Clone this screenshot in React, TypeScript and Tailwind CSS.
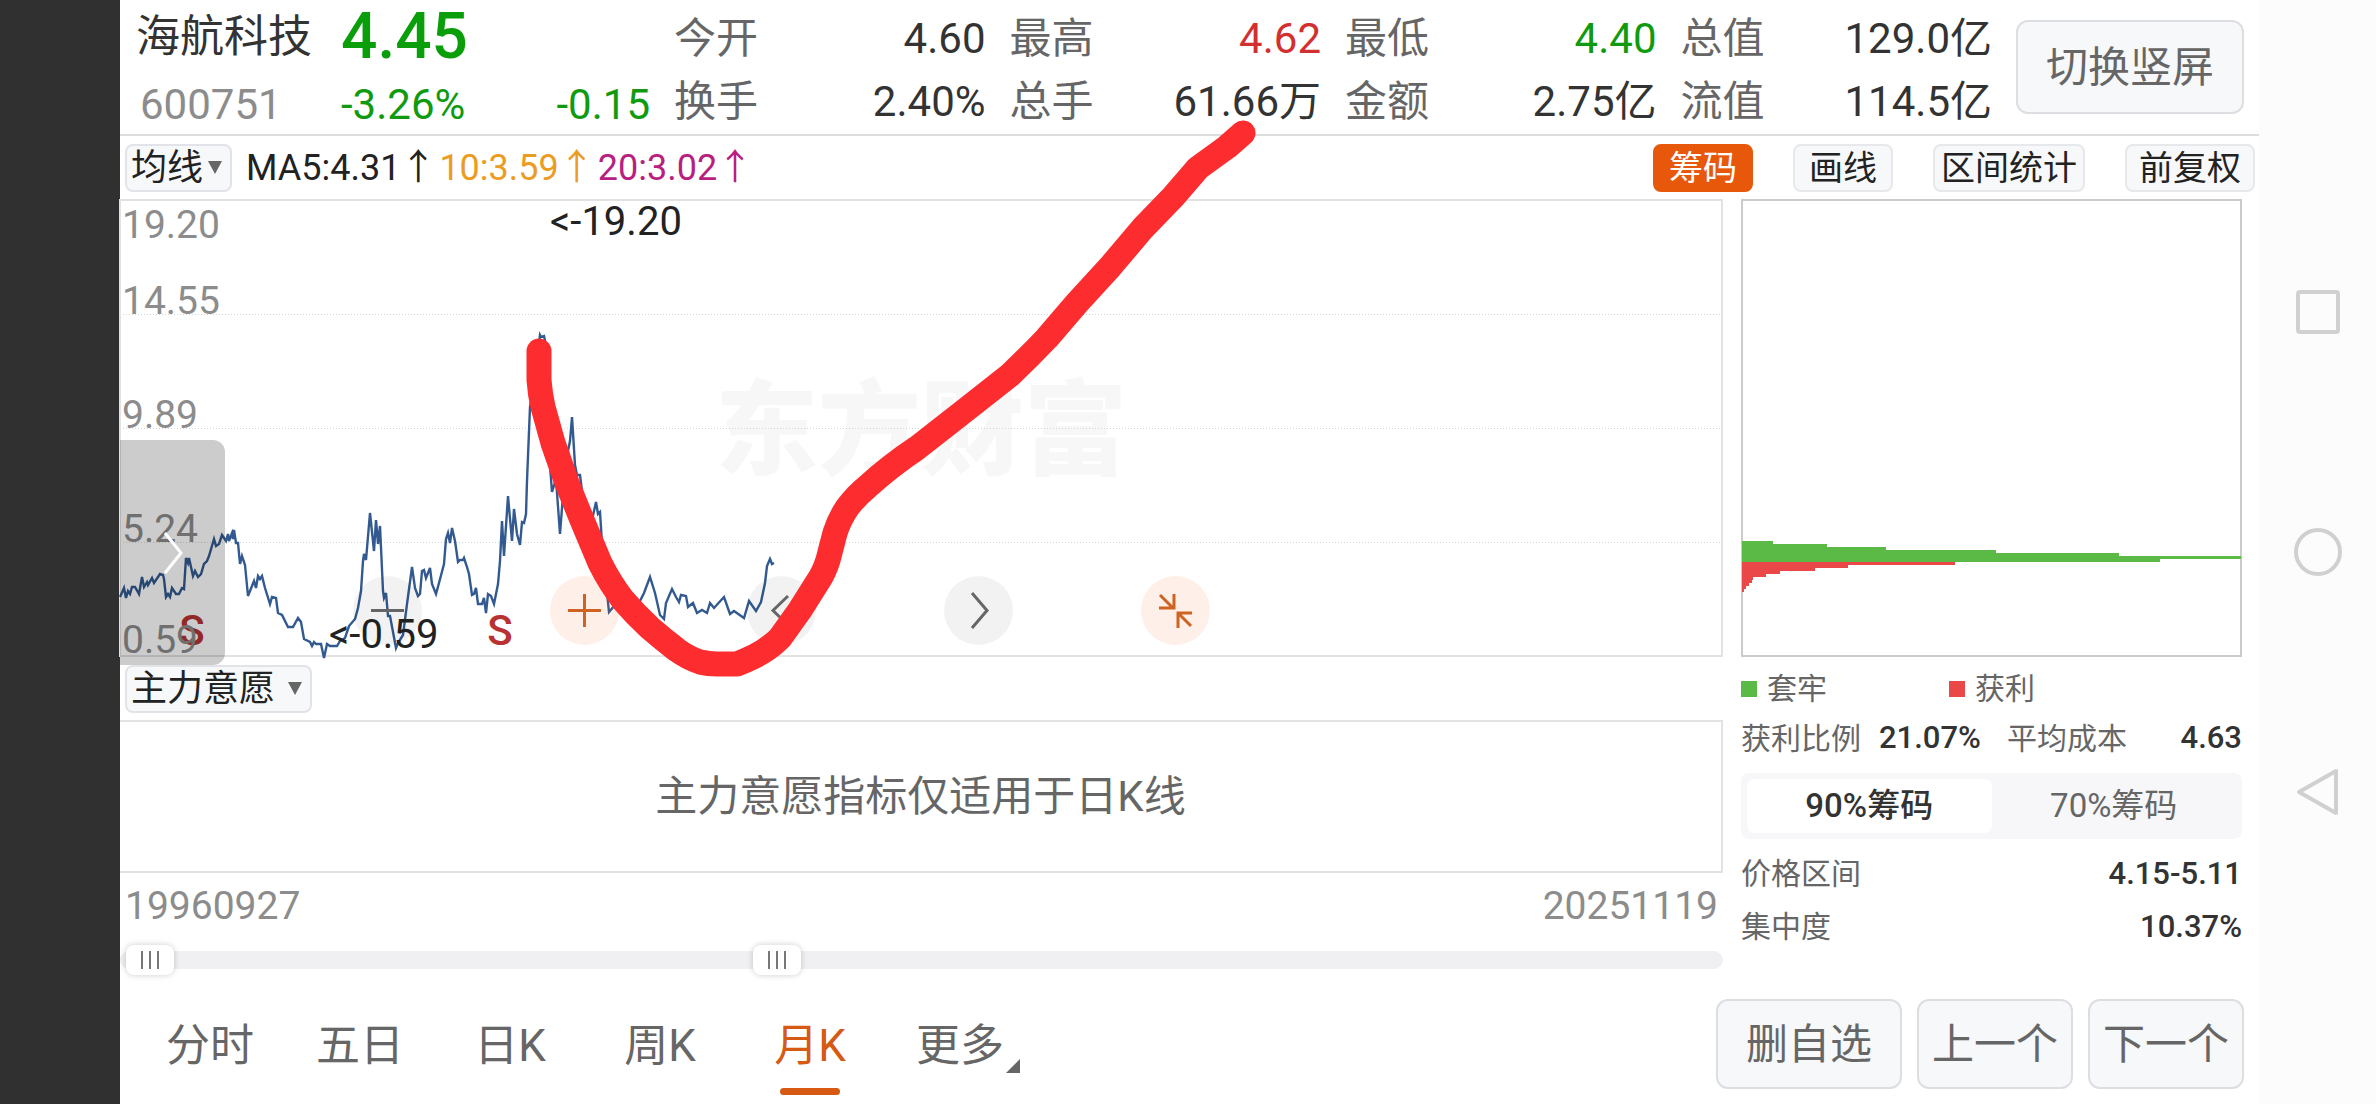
import { useState } from "react";
import clsx from "clsx";

interface Quote {
  label: string;
  value: string;
  color?: string;
}

const quotes: Quote[] = [
  { label: "今开", value: "4.60" },
  { label: "最高", value: "4.62", color: "text-[#d23030]" },
  { label: "最低", value: "4.40", color: "text-[#0f9a0f]" },
  { label: "总值", value: "129.0亿" },
  { label: "换手", value: "2.40%" },
  { label: "总手", value: "61.66万" },
  { label: "金额", value: "2.75亿" },
  { label: "流值", value: "114.5亿" },
];

const tools = [
  { name: "筹码", padding: "px-3.5" },
  { name: "画线", padding: "px-3.5" },
  { name: "区间统计", padding: "px-1.5" },
  { name: "前复权", padding: "px-3" },
];

const periods = ["分时", "五日", "日K", "周K", "月K", "更多"];

const axis = [
  { value: "19.20", y: 39 },
  { value: "14.55", y: 115 },
  { value: "9.89", y: 229 },
  { value: "5.24", y: 343 },
  { value: "0.59", y: 454 },
];

const priceLine =
  "0,398 4,389 6,399 8,392 10,395 12,388 15,388 19,395 22,378 24,388 27,383 28,386 32,379 34,384 40,375 43,376 44,380 46,398 48,395 50,398 52,389 56,395 59,395 62,389 64,390 66,359 68,364 69,359 73,377 75,372 78,378 81,375 84,365 87,362 89,357 94,340 96,347 99,345 102,336 106,342 108,335 109,342 112,334 113,340 114,331 116,344 118,344 120,365 122,357 125,366 128,397 134,382 136,389 138,377 140,380 142,377 145,389 150,405 152,398 156,399 158,414 162,416 168,428 173,428 178,419 181,423 184,440 190,443 192,447 194,443 196,445 201,445 204,459 207,445 210,447 217,447 220,442 225,439 229,427 235,420 238,409 241,392 243,362 244,355 246,361 250,314 254,352 256,321 258,345 260,327 263,392 264,399 266,394 268,417 270,417 276,449 278,444 283,436 287,405 292,368 295,389 298,397 300,395 302,372 304,371 306,379 310,369 312,385 316,395 319,384 324,365 326,340 328,334 330,344 332,329 335,342 338,363 340,361 343,361 344,359 347,368 349,375 352,396 354,395 356,389 358,405 362,405 364,399 366,414 368,395 371,397 374,405 378,385 380,362 382,322 384,357 388,297 392,342 394,310 397,335 400,346 402,323 404,324 406,315 407,282 410,208 413,190 420,136 421,138 424,137 425,142 428,240 432,293 436,280 440,335 443,296 448,252 450,242 452,218 455,266 457,276 460,276 463,300 470,330 476,303 478,315 480,313 482,344 489,413 500,400 510,410 520,402 524,394 530,378 535,394 540,416 544,420 546,404 552,390 556,398 559,403 561,396 566,397 568,408 573,404 577,414 582,411 587,414 590,404 594,409 604,398 610,415 614,412 624,419 629,402 636,412 641,403 645,384 647,367 650,360 652,365 654,364";

const chips = [
  { width: 31, trapped: true },
  { width: 85, trapped: true },
  { width: 144, trapped: true },
  { width: 254, trapped: true },
  { width: 377, trapped: true },
  { width: 499, trapped: true },
  { width: 418, trapped: true },
  { width: 213, trapped: false },
  { width: 106, trapped: false },
  { width: 73, trapped: false },
  { width: 38, trapped: false },
  { width: 24, trapped: false },
  { width: 11, trapped: false },
  { width: 10, trapped: false },
  { width: 7, trapped: false },
  { width: 4, trapped: false },
  { width: 2, trapped: false },
];

const Header = () => (
  <header className="flex h-[136px] items-center border-b-2 border-[#dcdddf] pl-4 pr-[15px]">
    <div className="grid w-[514px] grid-cols-[205px_1fr] pt-2 leading-[68px]">
      <h1 className="text-[44px] text-[#333]">海航科技</h1>
      <div className="text-[64px] font-medium text-[#0a9f0a]">4.45</div>
      <div className="pl-1 text-[42px] text-[#8c8c8c]">600751</div>
      <div className="flex justify-between text-[42px] text-[#0f9a0f]">
        <span>-3.26%</span>
        <span>-0.15</span>
      </div>
    </div>
    <dl className="ml-6 grid flex-1 grid-cols-4 gap-x-6 pt-1.5 text-[42px] leading-[63px]">
      {quotes.map((quote) => (
        <div key={quote.label} className="flex justify-between">
          <dt className="text-[#666]">{quote.label}</dt>
          <dd className={quote.color ?? "text-[#333]"}>{quote.value}</dd>
        </div>
      ))}
    </dl>
    <button className="ml-6 h-[94px] w-[228px] rounded-xl border-2 border-[#dcdee2] bg-[#f7f8fa] text-[42px] text-[#666]">切换竖屏</button>
  </header>
);

interface DropdownProps {
  label: string;
  option: string;
  width: string;
}

const Dropdown = ({ label, option, width }: DropdownProps) => (
  <div className={clsx("relative ml-[5px] h-12", width)}>
    <select aria-label={label} className="h-full w-full appearance-none rounded-lg border-2 border-[#e1e3e8] bg-[#f7f8fa] pl-1 text-[36px] leading-[44px] text-[#222]">
      <option>{option}</option>
    </select>
    <svg className="pointer-events-none absolute right-2.5 top-[17px] h-3.5 w-3.5" viewBox="0 0 14 14">
      <path d="M0 0H14L7 13Z" fill="#666" />
    </svg>
  </div>
);

const Toolbar = () => {
  const [tool, setTool] = useState("筹码");

  return (
    <div className="flex h-[63px] items-center pr-1">
      <Dropdown label="均线" option="均线" width="w-[107px]" />
      <div className="ml-3.5 flex flex-1 gap-[3px] text-[36px] leading-[48px]">
        <span className="text-[#222]">MA5:4.31↑</span>
        <span className="text-[#eb9c22]">10:3.59↑</span>
        <span className="text-[#b81f80]">20:3.02↑</span>
      </div>
      <div className="flex gap-10 text-[34px] leading-[44px]">
        {tools.map(({ name, padding }) => (
          <button
            key={name}
            onClick={() => setTool(name)}
            className={clsx("rounded-lg border-2", padding, tool === name ? "border-[#e8580a] bg-[#e8580a] text-white" : "border-[#e6e8ec] bg-[#f7f8fa] text-[#222]")}
          >
            {name}
          </button>
        ))}
      </div>
    </div>
  );
};

const PriceChart = () => (
  <div className="relative">
    <svg className="block h-auto w-full overflow-visible" viewBox="0 0 1603 458" fontSize="39">
      <text x="595" y="268" fontSize="103" fontWeight="900" fill="#f7f7f7">
        东方财富
      </text>
      {[115, 229, 343].map((y) => (
        <line key={y} x1="0" x2="1602" y1={y + 0.5} y2={y + 0.5} stroke="#d4d4d4" strokeDasharray="1 2" />
      ))}
      <rect x="0" y="1" width="1602" height="456" fill="none" stroke="#e2e2e2" strokeWidth="2" />
      <polyline points={priceLine} fill="none" stroke="#335a90" strokeWidth="2.4" />
      <g fill="#b83232" fontSize="42" fontWeight="500" textAnchor="middle">
        <text x="72" y="446">S</text>
        <text x="380" y="446">S</text>
      </g>
      <g fill="#8c8c8c">
        {axis.map(({ value, y }) => (
          <text key={value} x="2" y={y}>
            {value}
          </text>
        ))}
      </g>
      <g fill="#222" fontSize="40">
        <text x="430" y="36">&lt;-19.20</text>
        <text x="209" y="449">&lt;-0.59</text>
      </g>
    </svg>

    {/* zoom and pan buttons */}
    <div className="absolute bottom-3 left-[233px] flex gap-32">
      <RoundButton label="缩小" path="M18 34.5H51" />
      <RoundButton label="放大" path="M18 34.5H51M34.5 18V51" accent />
      <RoundButton label="左移" path="M41 20L26 34.5L41 49" />
      <RoundButton label="右移" path="M28 17L43 34.5L28 52" />
      <RoundButton label="退出全屏" path="M19 19L32 32M33 18V32H18M50 50L37 37M37 52V37H51" accent />
    </div>

    <button aria-label="展开" className="absolute left-0 top-[241px] h-[225px] w-[105px] rounded-r-xl bg-black/20">
      <svg className="ml-11 h-11 w-5" viewBox="0 0 20 44" fill="none" stroke="#fff" strokeWidth="3">
        <path d="M1 2L17 22L1 42" />
      </svg>
    </button>
  </div>
);

interface RoundButtonProps {
  label: string;
  path: string;
  accent?: boolean;
}

const RoundButton = ({ label, path, accent }: RoundButtonProps) => (
  <button aria-label={label} className={clsx("h-[69px] w-[69px] rounded-full", accent ? "bg-[#f26a1b]/10 text-[#cf6321]" : "bg-black/5 text-[#666]")}>
    <svg viewBox="0 0 69 69" fill="none" stroke="currentColor" strokeWidth="3">
      <path d={path} />
    </svg>
  </button>
);

interface RangeHandleProps {
  label: string;
  value: number;
  onChange: (value: number) => void;
}

const RangeHandle = ({ label, value, onChange }: RangeHandleProps) => (
  <input
    type="range"
    aria-label={label}
    min={0}
    max={1000}
    value={value}
    onChange={(e) => onChange(Number(e.target.value))}
    className="pointer-events-none absolute inset-0 h-full w-full appearance-none bg-transparent [&::-webkit-slider-thumb]:pointer-events-auto [&::-webkit-slider-thumb]:h-[30px] [&::-webkit-slider-thumb]:w-12 [&::-webkit-slider-thumb]:appearance-none [&::-webkit-slider-thumb]:rounded-lg [&::-webkit-slider-thumb]:bg-white [&::-webkit-slider-thumb]:bg-[repeating-linear-gradient(90deg,#777_0_2px,#fff_2px_8px)] [&::-webkit-slider-thumb]:bg-[length:18px_18px] [&::-webkit-slider-thumb]:bg-center [&::-webkit-slider-thumb]:bg-no-repeat [&::-webkit-slider-thumb]:shadow-[0_0_6px_rgba(0,0,0,0.2)]"
  />
);

const ChartColumn = () => {
  const [start, setStart] = useState(4);
  const [end, setEnd] = useState(407);

  return (
    <section className="min-w-0 flex-1">
      <PriceChart />
      <div className="flex h-[63px] items-center">
        <Dropdown label="指标" option="主力意愿" width="w-[187px]" />
      </div>
      <div className="flex h-[153px] items-center justify-center border-2 border-l-0 border-[#e2e2e2] text-[42px] text-[#666]">主力意愿指标仅适用于日K线</div>
      <div className="flex justify-between px-[5px] pt-0.5 text-[39px] leading-[62px] text-[#8c8c8c]">
        <span>19960927</span>
        <span>20251119</span>
      </div>
      <div className="relative flex h-[46px] items-center">
        <div className="h-[18px] w-full rounded-full bg-[#f0f0f3]" />
        <RangeHandle label="开始日期" value={start} onChange={setStart} />
        <RangeHandle label="结束日期" value={end} onChange={setEnd} />
      </div>
    </section>
  );
};

const ChipColumn = () => {
  const [range, setRange] = useState("90%筹码");

  return (
    <aside className="w-[501px] text-[30px] text-[#666]">
      <svg className="block h-auto w-full" viewBox="0 0 501 458">
        <rect x="1" y="1" width="499" height="456" fill="#fff" stroke="#cbcbcb" strokeWidth="2" />
        {chips.map(({ width, trapped }, i) => (
          <rect key={i} x="1" y={342 + i * 3} width={width} height="3" fill={trapped ? "#5bb946" : "#e94748"} />
        ))}
      </svg>
      <div className="grid h-[63px] grid-cols-[208px_1fr] items-center">
        <div className="flex items-center gap-2.5">
          <i className="h-4 w-4 bg-[#5bb946]" />
          套牢
        </div>
        <div className="flex items-center gap-2.5">
          <i className="h-4 w-4 bg-[#e94748]" />
          获利
        </div>
      </div>
      <div className="flex h-9 items-center">
        <span>获利比例</span>
        <b className="ml-[18px] text-[31px] font-medium text-[#333]">21.07%</b>
        <span className="ml-[26px]">平均成本</span>
        <b className="ml-auto text-[31px] font-medium text-[#333]">4.63</b>
      </div>
      <div className="mt-[17px] flex rounded-lg bg-[#f7f7fa] p-1.5 text-[33px] leading-[54px]">
        {["90%筹码", "70%筹码"].map((name) => (
          <button key={name} onClick={() => setRange(name)} className={clsx("flex-1 rounded-lg", range === name && "bg-white font-medium text-[#333]")}>
            {name}
          </button>
        ))}
      </div>
      <div className="mt-2 flex justify-between leading-[53px]">
        <span>价格区间</span>
        <b className="text-[31px] font-medium text-[#333]">4.15-5.11</b>
      </div>
      <div className="flex justify-between leading-[53px]">
        <span>集中度</span>
        <b className="text-[31px] font-medium text-[#333]">10.37%</b>
      </div>
    </aside>
  );
};

const BottomBar = () => {
  const [period, setPeriod] = useState("月K");

  return (
    <footer className="flex items-center px-[15px] pb-3.5 pt-4">
      <nav className="flex flex-1">
        {periods.map((name) => (
          <button key={name} onClick={() => setPeriod(name)} className={clsx("relative h-[90px] w-[150px] pt-1 text-[44px]", period === name ? "text-[#d65a14]" : "text-[#666]")}>
            {name}
            {period === name && <span className="absolute -bottom-1.5 left-[45px] h-[7px] w-[60px] rounded-full bg-[#d65a14]" />}
            {name === "更多" && (
              <svg className="absolute bottom-4 right-[15px] h-3.5 w-3.5" viewBox="0 0 14 14">
                <path d="M14 0V14H0Z" fill="#666" />
              </svg>
            )}
          </button>
        ))}
      </nav>
      <div className="flex gap-[15px] text-[42px] text-[#666]">
        <button className="h-[90px] rounded-xl border-2 border-[#dcdee2] bg-[#f7f8fa] px-7">删自选</button>
        <button className="h-[90px] rounded-xl border-2 border-[#dcdee2] bg-[#f7f8fa] px-[13px]">上一个</button>
        <button className="h-[90px] rounded-xl border-2 border-[#dcdee2] bg-[#f7f8fa] px-[13px]">下一个</button>
      </div>
    </footer>
  );
};

const SystemNav = () => (
  <div className="flex w-[117px] flex-col items-center gap-48 bg-[#fcfcfc] pt-72">
    <button aria-label="最近任务">
      <svg className="h-12 w-12" viewBox="0 0 48 48" fill="none" stroke="#d0d0d0" strokeWidth="4">
        <rect x="4" y="4" width="40" height="40" rx="2" />
      </svg>
    </button>
    <button aria-label="主屏幕">
      <svg className="h-12 w-12" viewBox="0 0 48 48" fill="none" stroke="#d0d0d0" strokeWidth="4">
        <circle cx="24" cy="24" r="22" />
      </svg>
    </button>
    <button aria-label="返回">
      <svg className="h-12 w-12" viewBox="0 0 48 48" fill="none" stroke="#d0d0d0" strokeWidth="4" strokeLinejoin="round">
        <path d="M42 3V45L5 24Z" />
      </svg>
    </button>
  </div>
);

// freehand stroke drawn over the whole page
const Marker = () => (
  <svg className="pointer-events-none absolute inset-0 h-full w-full" viewBox="0 0 2139 1104" fill="none" stroke="#fd2c2e" strokeWidth="25" strokeLinecap="round" strokeLinejoin="round">
    <path d="M419 351L419 380Q420 394 423 407L433 443L447 483L462 520L480 563Q490 583 503 600Q515 614 530 628Q544 640 557 650Q568 658 580 662Q588 664 597 664L617 664Q625 661 633 657Q648 650 660 638L680 610L697 583Q704 573 708 560L715 533Q719 520 727 508Q736 496 747 487Q770 466 797 448L843 412L890 375Q909 357 927 338L957 303L990 267L1023 228L1053 197L1078 168L1107 147L1123 133" />
  </svg>
);

const App = () => (
  <div className="flex min-h-screen bg-white font-['Roboto','Noto_Sans_CJK_SC',sans-serif]">
    <div className="w-[120px] bg-[#303030]" />
    <main className="relative min-w-0 flex-1">
      <Header />
      <Toolbar />
      <div className="flex gap-[18px] pr-[17px]">
        <ChartColumn />
        <ChipColumn />
      </div>
      <BottomBar />
      <Marker />
    </main>
    <SystemNav />
  </div>
);

export default App;
